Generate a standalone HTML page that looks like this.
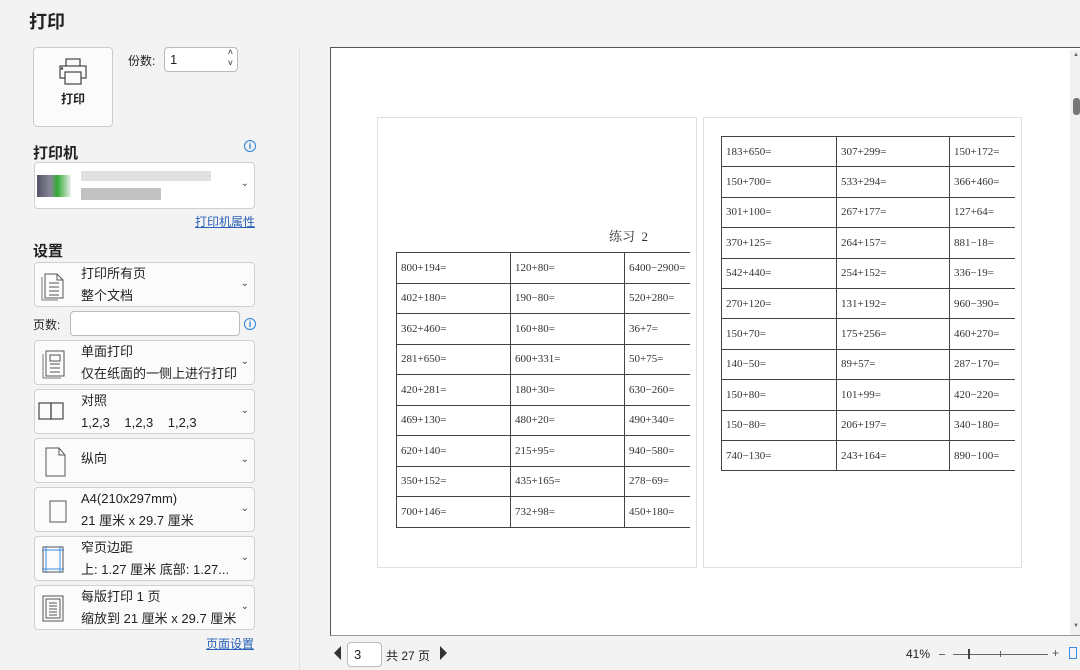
<!DOCTYPE html>
<html><head><meta charset="utf-8"><style>
*{margin:0;padding:0;box-sizing:border-box}
body{width:1080px;height:670px;background:#f3f3f3;font-family:"Liberation Sans","Noto Sans CJK SC",sans-serif;color:#222;position:relative;overflow:hidden}
.a{position:absolute}
.h{font-weight:bold;font-size:15px}
.box{position:absolute;left:34px;width:221px;height:45px;background:#fbfbfb;border:1px solid #d0d0d0;border-radius:4px}
.box .t1{position:absolute;left:46px;top:2px;font-size:13px;line-height:18px}
.box .t2{position:absolute;left:46px;top:24px;font-size:13px;line-height:18px}
.box .ch{position:absolute;right:5px;top:15px;font-size:10px;color:#444}
.box .ic{position:absolute;left:6px;top:8px}
.lnk{color:#2a62b8;text-decoration:underline;font-size:12px}
.pg{position:absolute;background:#fff;border:1px solid #e0e0e0}
table{position:absolute;border-collapse:collapse;font-family:"Liberation Serif","Noto Serif CJK SC",serif;font-size:11px;color:#333}
td{border:1px solid #444;padding:0 0 0 4px;vertical-align:middle}
td:last-child{border-right:none}
</style></head><body>
<div class="a h" style="left:29px;top:8px;font-size:18px">打印</div>
<div class="a" style="left:33px;top:47px;width:80px;height:80px;background:#fbfbfb;border:1px solid #ccc;border-radius:4px">
<svg class="a" style="left:24px;top:10px" width="30" height="28" viewBox="0 0 30 28" fill="none" stroke="#444" stroke-width="1.2"><rect x="8" y="1" width="14" height="8"/><rect x="2" y="8" width="26" height="12" fill="#fbfbfb"/><rect x="7" y="14" width="16" height="12" fill="#fbfbfb"/><rect x="3.5" y="10" width="1" height="1" fill="#444"/></svg>
<div class="a" style="left:27px;top:42px;font-size:12px;font-weight:bold">打印</div></div>
<div class="a" style="left:128px;top:52px;font-size:12px">份数:</div>
<div class="a" style="left:164px;top:47px;width:74px;height:25px;background:#fff;border:1px solid #bbb;border-radius:4px;font-size:13px;padding:4px 5px">1<span class="a" style="right:4px;top:-1px;font-size:9px;line-height:11px">˄<br>˅</span></div>
<div class="a h" style="left:33px;top:142px">打印机</div>
<div class="a" style="left:244px;top:140px;width:12px;height:12px;border:1.2px solid #2a7fd4;border-radius:50%;color:#2a7fd4;font-size:9px;text-align:center;line-height:10px;font-weight:bold">i</div>
<div class="box" style="top:162px;height:47px;background:#fff">
<div class="a" style="left:2px;top:12px;width:34px;height:22px;background:linear-gradient(90deg,#556 0,#889 40%,#3a3 60%,#eee 100%)"></div>
<div class="a" style="left:46px;top:8px;width:130px;height:10px;background:#ccc;opacity:.6"></div>
<div class="a" style="left:46px;top:25px;width:80px;height:12px;background:#999;opacity:.6"></div>
<span class="ch">⌄</span></div>
<div class="a lnk" style="left:195px;top:213px">打印机属性</div>
<div class="a h" style="left:33px;top:240px">设置</div>
<div class="box" style="top:262px"><svg class="ic" width="26" height="30" fill="none" stroke="#555"><path d="M4 3h12l6 6v18H4z M16 3v6h6 M8 12h10M8 16h10M8 20h10M8 24h10"/><path d="M1 6v23h16" stroke="#777"/></svg><div class="t1">打印所有页</div><div class="t2">整个文档</div><span class="ch">⌄</span></div>
<div class="a" style="left:33px;top:316px;font-size:12px">页数:</div>
<div class="a" style="left:70px;top:311px;width:170px;height:25px;background:#fff;border:1px solid #bbb;border-radius:4px"></div>
<div class="a" style="left:244px;top:318px;width:12px;height:12px;border:1.2px solid #2a7fd4;border-radius:50%;color:#2a7fd4;font-size:9px;text-align:center;line-height:10px;font-weight:bold">i</div>
<div class="box" style="top:340px"><svg class="ic" width="26" height="30" fill="none" stroke="#555"><path d="M5 2h18v25H5z M9 6h10v6H9z M9 15h10M9 19h10M9 23h10"/><path d="M2 5v24h18" stroke="#777"/></svg><div class="t1">单面打印</div><div class="t2">仅在纸面的一侧上进行打印</div><span class="ch">⌄</span></div>
<div class="box" style="top:389px"><svg class="ic" style="left:3px;top:12px" width="30" height="20" fill="none" stroke="#555" stroke-width="1.3"><rect x="1" y="1" width="12" height="16"/><rect x="13" y="1" width="12" height="16"/></svg><div class="t1">对照</div><div class="t2">1,2,3&nbsp;&nbsp;&nbsp;&nbsp;1,2,3&nbsp;&nbsp;&nbsp;&nbsp;1,2,3</div><span class="ch">⌄</span></div>
<div class="box" style="top:438px"><svg class="ic" width="26" height="30" fill="none" stroke="#555"><path d="M5 1h13l6 7v21H5z M18 1v7h6"/></svg><div class="t1" style="top:11px">纵向</div><span class="ch">⌄</span></div>
<div class="box" style="top:487px"><svg class="ic" style="top:11px" width="26" height="26" fill="none" stroke="#555"><rect x="9" y="2" width="16" height="21"/></svg><div class="t1">A4(210x297mm)</div><div class="t2">21 厘米 x 29.7 厘米</div><span class="ch">⌄</span></div>
<div class="box" style="top:536px"><svg class="ic" width="26" height="30" fill="none"><rect x="2" y="2" width="20" height="25" stroke="#555"/><path d="M5 1v27M19 1v27M1 5h22M1 24h22" stroke="#3a8de0"/></svg><div class="t1">窄页边距</div><div class="t2">上: 1.27 厘米 底部: 1.27...</div><span class="ch">⌄</span></div>
<div class="box" style="top:585px"><svg class="ic" width="26" height="30" fill="none" stroke="#555"><rect x="2" y="2" width="20" height="25"/><rect x="5" y="5" width="14" height="19"/><path d="M8 9h8M8 12h8M8 15h8M8 18h8M8 21h8"/></svg><div class="t1">每版打印 1 页</div><div class="t2">缩放到 21 厘米 x 29.7 厘米</div><span class="ch">⌄</span></div>
<div class="a lnk" style="left:206px;top:635px">页面设置</div>
<div class="a" style="left:299px;top:47px;width:1px;height:623px;background:#e2e2e2"></div>
<div class="a" style="left:330px;top:47px;width:750px;height:589px;background:#fff;border-top:1px solid #555;border-left:1px solid #555;border-bottom:1px solid #999"></div>
<div class="a" style="left:1070px;top:50px;width:10px;height:585px;background:#f0f0f0"></div>
<div class="a" style="left:1073px;top:98px;width:7px;height:17px;background:#777;border-radius:3px"></div>
<div class="a" style="left:1073px;top:52px;font-size:6px;color:#666">▲</div>
<div class="a" style="left:1073px;top:623px;font-size:6px;color:#666">▼</div>
<div class="pg" style="left:377px;top:117px;width:320px;height:451px"></div>
<div class="a" style="left:609px;top:226px;font-family:'Liberation Serif','Noto Serif CJK SC',serif;font-size:13px;color:#333">练习&nbsp;&nbsp;2</div>
<table style="left:396px;top:252px;width:294px">
<colgroup><col style="width:114px"><col style="width:114px"><col></colgroup>
<tr style="height:30.5px"><td>800+194=</td><td>120+80=</td><td>6400−2900=</td></tr>
<tr style="height:30.5px"><td>402+180=</td><td>190−80=</td><td>520+280=</td></tr>
<tr style="height:30.5px"><td>362+460=</td><td>160+80=</td><td>36+7=</td></tr>
<tr style="height:30.5px"><td>281+650=</td><td>600+331=</td><td>50+75=</td></tr>
<tr style="height:30.5px"><td>420+281=</td><td>180+30=</td><td>630−260=</td></tr>
<tr style="height:30.5px"><td>469+130=</td><td>480+20=</td><td>490+340=</td></tr>
<tr style="height:30.5px"><td>620+140=</td><td>215+95=</td><td>940−580=</td></tr>
<tr style="height:30.5px"><td>350+152=</td><td>435+165=</td><td>278−69=</td></tr>
<tr style="height:30.5px"><td>700+146=</td><td>732+98=</td><td>450+180=</td></tr>
</table>
<div class="pg" style="left:703px;top:117px;width:319px;height:451px"></div>
<table style="left:721px;top:136px;width:294px">
<colgroup><col style="width:115px"><col style="width:113px"><col></colgroup>
<tr style="height:30.4px"><td>183+650=</td><td>307+299=</td><td>150+172=</td></tr>
<tr style="height:30.4px"><td>150+700=</td><td>533+294=</td><td>366+460=</td></tr>
<tr style="height:30.4px"><td>301+100=</td><td>267+177=</td><td>127+64=</td></tr>
<tr style="height:30.4px"><td>370+125=</td><td>264+157=</td><td>881−18=</td></tr>
<tr style="height:30.4px"><td>542+440=</td><td>254+152=</td><td>336−19=</td></tr>
<tr style="height:30.4px"><td>270+120=</td><td>131+192=</td><td>960−390=</td></tr>
<tr style="height:30.4px"><td>150+70=</td><td>175+256=</td><td>460+270=</td></tr>
<tr style="height:30.4px"><td>140−50=</td><td>89+57=</td><td>287−170=</td></tr>
<tr style="height:30.4px"><td>150+80=</td><td>101+99=</td><td>420−220=</td></tr>
<tr style="height:30.4px"><td>150−80=</td><td>206+197=</td><td>340−180=</td></tr>
<tr style="height:30.4px"><td>740−130=</td><td>243+164=</td><td>890−100=</td></tr>
</table>
<div class="a" style="left:334px;top:646px;width:0;height:0;border-top:7px solid transparent;border-bottom:7px solid transparent;border-right:7px solid #333"></div>
<div class="a" style="left:347px;top:642px;width:35px;height:25px;background:#fff;border:1px solid #bbb;border-radius:4px;font-size:13px;padding:4px 6px">3</div>
<div class="a" style="left:386px;top:647px;font-size:12px">共 27 页</div>
<div class="a" style="left:440px;top:646px;width:0;height:0;border-top:7px solid transparent;border-bottom:7px solid transparent;border-left:7px solid #333"></div>
<div class="a" style="left:906px;top:647px;font-size:12px">41%</div>
<div class="a" style="left:939px;top:654px;width:6px;height:1px;background:#666"></div>
<div class="a" style="left:953px;top:654px;width:95px;height:1px;background:#666"></div>
<div class="a" style="left:968px;top:649px;width:2px;height:10px;background:#444"></div>
<div class="a" style="left:1000px;top:651px;width:1px;height:6px;background:#666"></div>
<div class="a" style="left:1052px;top:646px;font-size:12px;color:#555">+</div>
<div class="a" style="left:1069px;top:647px;width:8px;height:12px;border:1px solid #3a8de0"></div>
</body></html>
